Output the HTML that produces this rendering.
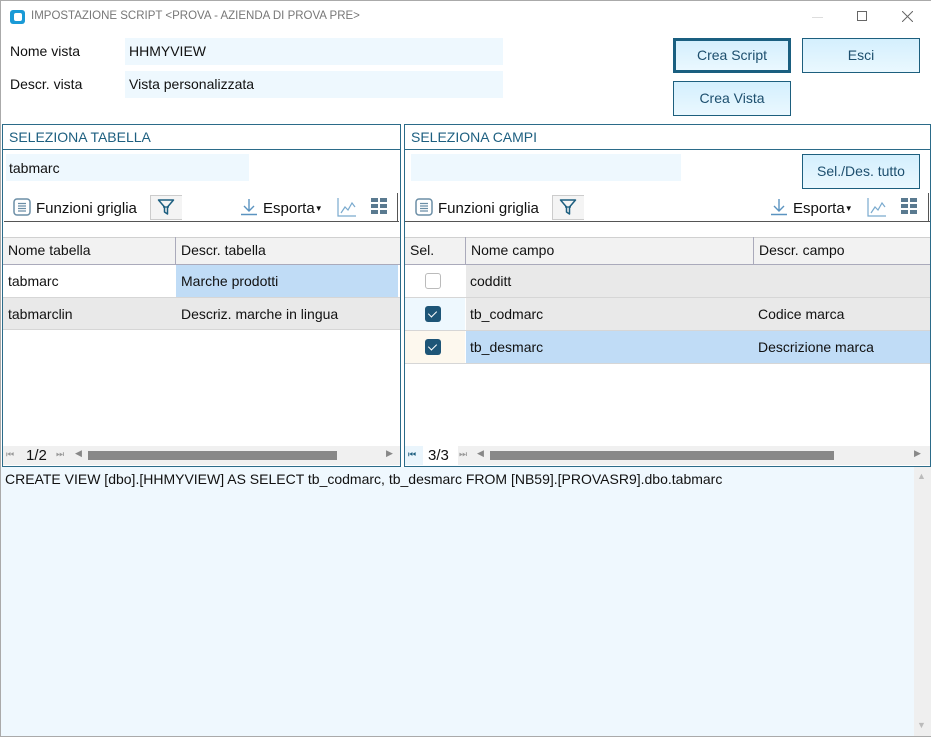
<!DOCTYPE html>
<html><head><meta charset="utf-8"><style>
*{box-sizing:border-box;margin:0;padding:0}
body{width:931px;height:737px;overflow:hidden;background:#fff;font-family:"Liberation Sans",sans-serif;font-size:14px;color:#111;position:relative}
.a{position:absolute;white-space:nowrap}
.inp{position:absolute;background:#eef8fe}
.btn{position:absolute;border:1px solid #1d5f7e;background:linear-gradient(#d4effd,#eaf8ff);color:#1d4f6e;text-align:center;font-size:14px}
.ph{position:absolute;border:1px solid #2b6b89;color:#1d5f80}
.hd{position:absolute;height:26px;border-bottom:1px solid #2b6b89;padding:5px 0 0 6px;font-size:14px;color:#1d5f80}
.cell{position:absolute;padding-left:5px;line-height:33px}
.chk{position:absolute;width:16px;height:16px;border-radius:3px;background:#1d5577}
.chk:after{content:"";position:absolute;left:5px;top:3px;width:4px;height:7px;border:solid #fff;border-width:0 1.5px 1.5px 0;transform:rotate(45deg)}
svg{position:absolute}
</style></head><body>
<div class="a" style="left:0;top:0;width:931px;height:1px;background:#aaa"></div>
<div class="a" style="left:0;top:0;width:1px;height:737px;background:#aaa"></div>
<div class="a" style="left:0;top:736px;width:931px;height:1px;background:#aaa"></div>
<div class="a" style="left:10px;top:10px;width:15px;height:14px;background:#1a9ad6;border-radius:3px"></div>
<div class="a" style="left:14px;top:13px;width:8px;height:8px;background:#fff;border-radius:2px"></div>
<div class="a" style="left:31px;top:10px;font-size:11.5px;color:#777">IMPOSTAZIONE SCRIPT &lt;PROVA - AZIENDA DI PROVA PRE&gt;</div>
<div class="a" style="left:812px;top:17px;width:11px;height:1px;background:#ddd"></div>
<div class="a" style="left:857px;top:11px;width:10px;height:10px;border:1px solid #666"></div>
<svg style="left:902px;top:11px" width="11" height="11"><path d="M0 0L11 11M11 0L0 11" stroke="#666" stroke-width="1"/></svg>

<div class="a" style="left:10px;top:43px">Nome vista</div>
<div class="inp" style="left:125px;top:38px;width:378px;height:27px"></div>
<div class="a" style="left:129px;top:43px">HHMYVIEW</div>
<div class="a" style="left:10px;top:76px">Descr. vista</div>
<div class="inp" style="left:125px;top:71px;width:378px;height:27px"></div>
<div class="a" style="left:129px;top:76px">Vista personalizzata</div>

<div class="btn" style="left:673px;top:38px;width:118px;height:35px;border:3px solid #1a5f80;line-height:29px">Crea Script</div>
<div class="btn" style="left:802px;top:38px;width:118px;height:35px;line-height:33px">Esci</div>
<div class="btn" style="left:673px;top:81px;width:118px;height:35px;line-height:33px">Crea Vista</div>

<!-- left panel -->
<div class="ph" style="left:2px;top:124px;width:399px;height:343px"></div>
<div class="hd" style="left:3px;top:124px;width:397px">SELEZIONA TABELLA</div>
<div class="inp" style="left:6px;top:154px;width:243px;height:27px"></div>
<div class="a" style="left:9px;top:160px">tabmarc</div>
<div class="a" style="left:4px;top:221px;width:395px;height:1px;background:#555"></div>
<div class="a" style="left:397px;top:193px;width:1px;height:28px;background:#555"></div>
<svg style="left:13px;top:198px" width="18" height="18"><rect x="1" y="1" width="16" height="16" rx="3" fill="#fff" stroke="#6b8ea6" stroke-width="1.5"/><path d="M5 5.5H13M5 8H13M5 10.5H13M5 13H13" stroke="#6b8ea6" stroke-width="1.2"/></svg>
<div class="a" style="left:36px;top:200px;font-size:15px">Funzioni griglia</div>
<div class="a" style="left:150px;top:195px;width:32px;height:25px;border:1px solid #ccc;border-right:none;background:#f4f4f4"></div>
<svg style="left:157px;top:198px" width="18" height="18"><path d="M1.5 2H16.5L10.5 9V16L7.5 14V9Z" fill="none" stroke="#1d5f80" stroke-width="1.5" stroke-linejoin="round"/><path d="M6 9H12" stroke="#1d5f80" stroke-width="1.3"/></svg>
<svg style="left:240px;top:198px" width="18" height="18"><path d="M9 1V13M4 8L9 13L14 8M1 16.5H17" fill="none" stroke="#5b93c0" stroke-width="1.4"/></svg>
<div class="a" style="left:263px;top:200px;font-size:15px">Esporta<span style="font-size:8px;vertical-align:2px">▼</span></div>
<svg style="left:337px;top:198px" width="20" height="19"><path d="M1 0V18H19" fill="none" stroke="#7aaace" stroke-width="1.2"/><path d="M4 15L8 9L11 12L15 5L18 9" fill="none" stroke="#7aaace" stroke-width="1.2"/></svg>
<svg style="left:371px;top:198px" width="16" height="16"><g fill="#5a7a90"><rect x="0" y="0" width="7" height="4"/><rect x="9" y="0" width="7" height="4"/><rect x="0" y="6" width="7" height="4"/><rect x="9" y="6" width="7" height="4"/><rect x="0" y="12" width="7" height="4"/><rect x="9" y="12" width="7" height="4"/></g></svg>

<div class="a" style="left:3px;top:237px;width:397px;height:28px;background:#f2f2f2;border-top:1px solid #d0d0d0;border-bottom:1px solid #aab"></div>
<div class="a" style="left:175px;top:237px;width:1px;height:28px;background:#aab"></div>
<div class="cell" style="left:3px;top:236px;line-height:28px">Nome tabella</div>
<div class="cell" style="left:176px;top:236px;line-height:28px">Descr. tabella</div>
<div class="a" style="left:176px;top:265px;width:222px;height:32px;background:#c0dcf6"></div>
<div class="cell" style="left:3px;top:265px">tabmarc</div>
<div class="cell" style="left:176px;top:265px">Marche prodotti</div>
<div class="a" style="left:3px;top:297px;width:397px;height:33px;background:#e9e9e9;border-top:1px solid #d6d6d6;border-bottom:1px solid #d6d6d6"></div>
<div class="cell" style="left:3px;top:298px">tabmarclin</div>
<div class="cell" style="left:176px;top:298px">Descriz. marche in lingua</div>
<div class="a" style="left:3px;top:446px;width:397px;height:19px;background:#f0f0f0"></div>
<div class="a" style="left:6px;top:449px;font-size:9px;color:#999">⏮</div>
<div class="a" style="left:26px;top:447px;font-size:15px">1/2</div>
<div class="a" style="left:56px;top:449px;font-size:9px;color:#999">⏭</div>
<div class="a" style="left:75px;top:448px;font-size:9px;color:#888">◀</div>
<div class="a" style="left:88px;top:451px;width:249px;height:9px;background:#888"></div>
<div class="a" style="left:386px;top:448px;font-size:9px;color:#888">▶</div>

<!-- right panel -->
<div class="ph" style="left:404px;top:124px;width:527px;height:343px"></div>
<div class="hd" style="left:405px;top:124px;width:525px">SELEZIONA CAMPI</div>
<div class="inp" style="left:411px;top:154px;width:270px;height:27px"></div>
<div class="btn" style="left:802px;top:154px;width:118px;height:35px;line-height:33px">Sel./Des. tutto</div>
<div class="a" style="left:405px;top:221px;width:525px;height:1px;background:#555"></div>
<div class="a" style="left:928px;top:193px;width:1px;height:28px;background:#555"></div>
<svg style="left:415px;top:198px" width="18" height="18"><rect x="1" y="1" width="16" height="16" rx="3" fill="#fff" stroke="#6b8ea6" stroke-width="1.5"/><path d="M5 5.5H13M5 8H13M5 10.5H13M5 13H13" stroke="#6b8ea6" stroke-width="1.2"/></svg>
<div class="a" style="left:438px;top:200px;font-size:15px">Funzioni griglia</div>
<div class="a" style="left:552px;top:195px;width:32px;height:25px;border:1px solid #ccc;border-right:none;background:#f4f4f4"></div>
<svg style="left:559px;top:198px" width="18" height="18"><path d="M1.5 2H16.5L10.5 9V16L7.5 14V9Z" fill="none" stroke="#1d5f80" stroke-width="1.5" stroke-linejoin="round"/><path d="M6 9H12" stroke="#1d5f80" stroke-width="1.3"/></svg>
<svg style="left:770px;top:198px" width="18" height="18"><path d="M9 1V13M4 8L9 13L14 8M1 16.5H17" fill="none" stroke="#5b93c0" stroke-width="1.4"/></svg>
<div class="a" style="left:793px;top:200px;font-size:15px">Esporta<span style="font-size:8px;vertical-align:2px">▼</span></div>
<svg style="left:867px;top:198px" width="20" height="19"><path d="M1 0V18H19" fill="none" stroke="#7aaace" stroke-width="1.2"/><path d="M4 15L8 9L11 12L15 5L18 9" fill="none" stroke="#7aaace" stroke-width="1.2"/></svg>
<svg style="left:901px;top:198px" width="16" height="16"><g fill="#5a7a90"><rect x="0" y="0" width="7" height="4"/><rect x="9" y="0" width="7" height="4"/><rect x="0" y="6" width="7" height="4"/><rect x="9" y="6" width="7" height="4"/><rect x="0" y="12" width="7" height="4"/><rect x="9" y="12" width="7" height="4"/></g></svg>

<div class="a" style="left:405px;top:237px;width:525px;height:28px;background:#f2f2f2;border-top:1px solid #d0d0d0;border-bottom:1px solid #aab"></div>
<div class="a" style="left:465px;top:237px;width:1px;height:28px;background:#aab"></div>
<div class="a" style="left:753px;top:237px;width:1px;height:28px;background:#aab"></div>
<div class="cell" style="left:405px;top:236px;line-height:28px">Sel.</div>
<div class="cell" style="left:466px;top:236px;line-height:28px">Nome campo</div>
<div class="cell" style="left:754px;top:236px;line-height:28px">Descr. campo</div>
<div class="a" style="left:466px;top:265px;width:464px;height:32px;background:#e9e9e9"></div>
<div class="a" style="left:405px;top:297px;width:525px;height:1px;background:#d6d6d6"></div>
<div class="a" style="left:405px;top:298px;width:60px;height:32px;background:#eef8fe"></div>
<div class="a" style="left:466px;top:298px;width:464px;height:32px;background:#e9e9e9"></div>
<div class="a" style="left:405px;top:330px;width:525px;height:1px;background:#d6d6d6"></div>
<div class="a" style="left:405px;top:331px;width:60px;height:32px;background:#fdf8ee"></div>
<div class="a" style="left:466px;top:331px;width:464px;height:32px;background:#c0dcf6"></div>
<div class="a" style="left:405px;top:363px;width:525px;height:1px;background:#d6d6d6"></div>
<div class="a" style="left:425px;top:273px;width:16px;height:16px;border:1px solid #bbb;border-radius:3px;background:#fff"></div>
<div class="chk" style="left:425px;top:306px"></div>
<div class="chk" style="left:425px;top:339px"></div>
<div class="cell" style="left:465px;top:265px">codditt</div>
<div class="cell" style="left:465px;top:298px">tb_codmarc</div>
<div class="cell" style="left:753px;top:298px">Codice marca</div>
<div class="cell" style="left:465px;top:331px">tb_desmarc</div>
<div class="cell" style="left:753px;top:331px">Descrizione marca</div>
<div class="a" style="left:405px;top:446px;width:525px;height:19px;background:#f0f0f0"></div>
<div class="a" style="left:405px;top:446px;width:18px;height:19px;background:#eaf5fc"></div>
<div class="a" style="left:408px;top:449px;font-size:9px;color:#1d5f80">⏮</div>
<div class="a" style="left:423px;top:446px;width:35px;height:19px;background:#fff"></div>
<div class="a" style="left:428px;top:447px;font-size:15px">3/3</div>
<div class="a" style="left:459px;top:449px;font-size:9px;color:#999">⏭</div>
<div class="a" style="left:477px;top:448px;font-size:9px;color:#888">◀</div>
<div class="a" style="left:490px;top:451px;width:344px;height:9px;background:#888"></div>
<div class="a" style="left:914px;top:448px;font-size:9px;color:#888">▶</div>

<!-- text area -->
<div class="a" style="left:1px;top:467px;width:913px;height:269px;background:#eff8fe"></div>
<div class="a" style="left:914px;top:467px;width:17px;height:269px;background:#efefef"></div>
<div class="a" style="left:917px;top:471px;font-size:9px;color:#bbb">▲</div>
<div class="a" style="left:917px;top:720px;font-size:9px;color:#bbb">▼</div>
<div class="a" style="left:5px;top:471px;font-size:14px">CREATE VIEW [dbo].[HHMYVIEW] AS SELECT tb_codmarc, tb_desmarc FROM [NB59].[PROVASR9].dbo.tabmarc</div>
</body></html>
